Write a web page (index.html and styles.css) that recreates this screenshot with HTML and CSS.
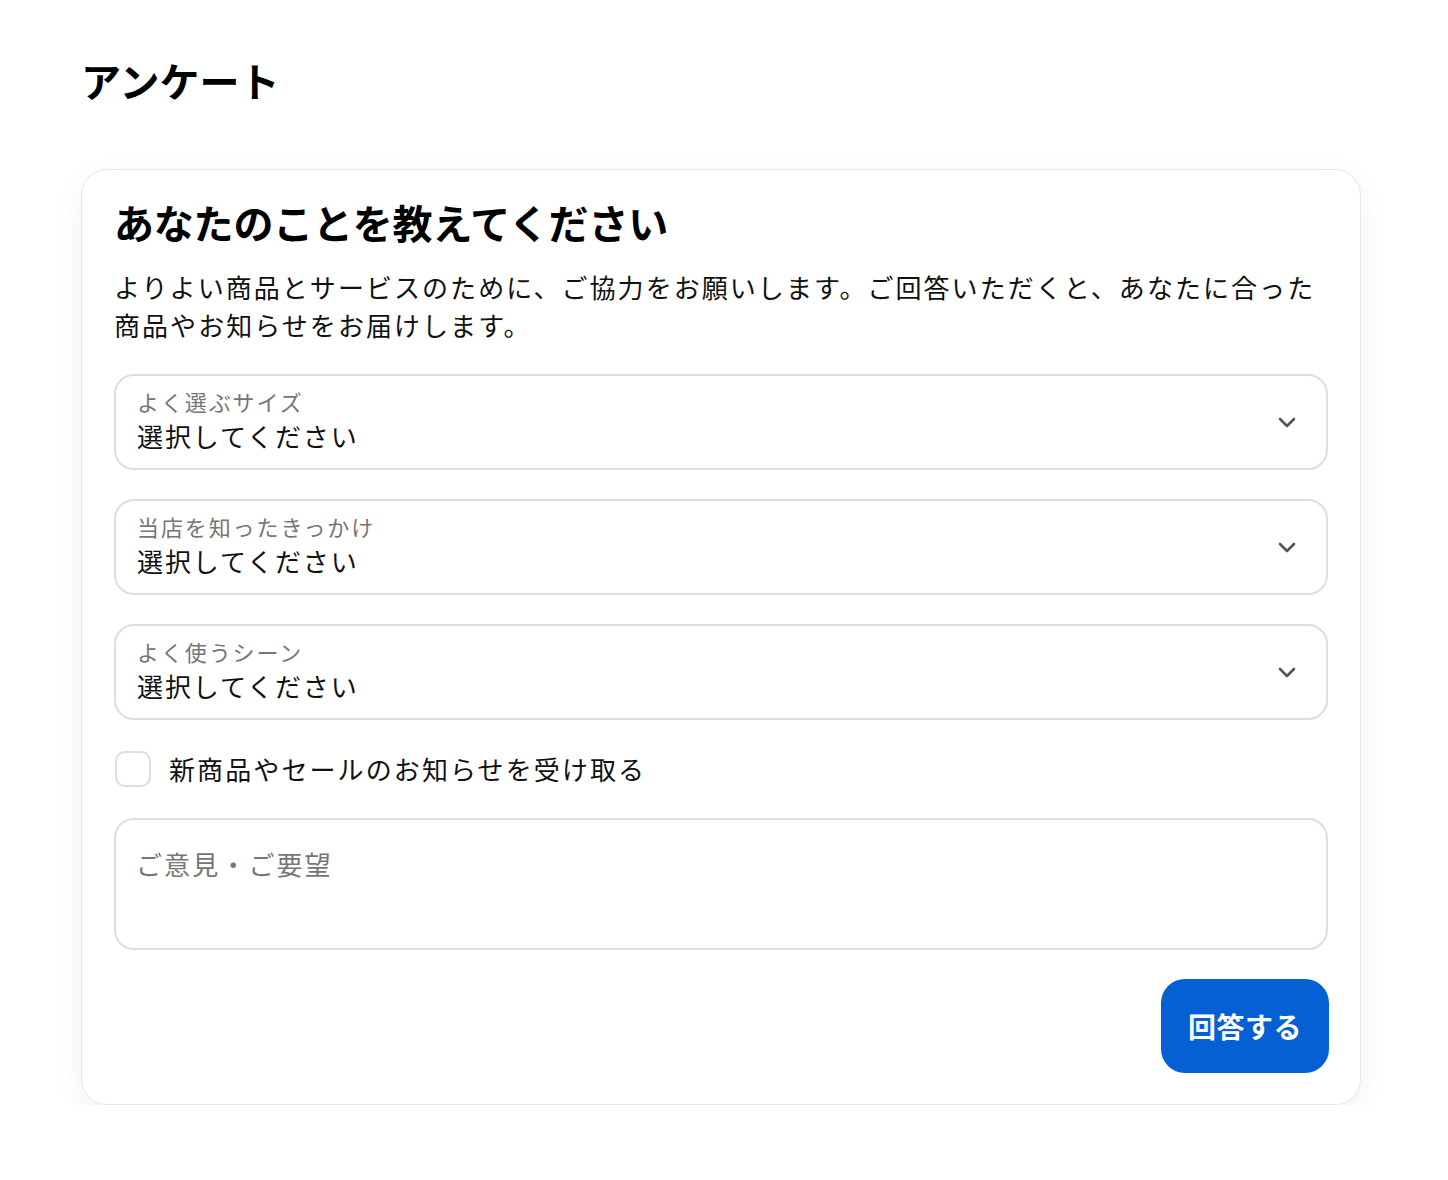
FILE: index.html
```html
<!DOCTYPE html>
<html lang="ja">
<head>
<meta charset="UTF-8">
<meta name="viewport" content="width=device-width, initial-scale=1.0">
<title>アンケート</title>
<link rel="stylesheet" href="styles.css">
</head>
<body>

<div class="page">
    <h1 class="page-title">アンケート</h1>

    <!-- アンケートカード -->
    <div class="card">
        <h2 class="card-title">あなたのことを教えてください</h2>
        <p class="lead">よりよい商品とサービスのために、ご協力をお願いします。ご回答いただくと、あなたに合った商品やお知らせをお届けします。</p>

        <div class="form">
            <div class="select">
                <div class="select-text">
                    <span class="select-label">よく選ぶサイズ</span>
                    <span class="select-value">選択してください</span>
                </div>
                <svg class="chevron" width="18" height="11" viewBox="0 0 18 11"><path d="M2 2l7 7 7-7" /></svg>
            </div>

            <div class="select">
                <div class="select-text">
                    <span class="select-label">当店を知ったきっかけ</span>
                    <span class="select-value">選択してください</span>
                </div>
                <svg class="chevron" width="18" height="11" viewBox="0 0 18 11"><path d="M2 2l7 7 7-7" /></svg>
            </div>

            <div class="select">
                <div class="select-text">
                    <span class="select-label">よく使うシーン</span>
                    <span class="select-value">選択してください</span>
                </div>
                <svg class="chevron" width="18" height="11" viewBox="0 0 18 11"><path d="M2 2l7 7 7-7" /></svg>
            </div>

            <label class="check">
                <span class="box"></span>
                <span class="check-text">新商品やセールのお知らせを受け取る</span>
            </label>

            <textarea class="comment" placeholder="ご意見・ご要望"></textarea>

            <div class="actions">
                <button class="submit">回答する</button>
            </div>
        </div>
    </div>
</div>

</body>
</html>
```

FILE: styles.css
```css
/* 全体 */
body {
    margin: 0;
    padding: 0;
    background: #fff;
    color: #111;
    font-family: "Noto Sans CJK JP", "Noto Sans", sans-serif;
}

.page {
    padding: 56px 0 0 81px;
}

.page-title {
    margin: 0 0 65px 0;
    font-size: 40px;
    line-height: 48px;
    font-weight: 700;
    color: #000;
}

/* カード */
.card {
    width: 1280px;
    box-sizing: border-box;
    border: 1px solid #e8e8e8;
    border-radius: 26px;
    background: #fff;
    box-shadow: 0 8px 28px rgba(0, 0, 0, 0.06);
    padding: 32px 32px 31px 32px;
}

.card-title {
    margin: -4px 0 22px 0;
    font-size: 40px;
    line-height: 48px;
    font-weight: 700;
    letter-spacing: -0.2px;
    color: #000;
}

.lead {
    margin: 0 0 30px 0;
    font-size: 26px;
    line-height: 38px;
    letter-spacing: 2.05px;
}

.form {
    display: flex;
    flex-direction: column;
    gap: 29px;
}

/* セレクト */
.select {
    height: 96px;
    box-sizing: border-box;
    border: 2px solid #dedede;
    border-radius: 20px;
    padding: 10px 30px 12px 21px;
    display: flex;
    align-items: center;
    justify-content: space-between;
}

.select-text {
    display: flex;
    flex-direction: column;
}

.select-label {
    font-size: 22px;
    line-height: 30px;
    color: #767676;
    letter-spacing: 1.9px;
}

.select-value {
    font-size: 26px;
    line-height: 40px;
    letter-spacing: 1.9px;
}

.chevron {
    fill: none;
    stroke: #555;
    stroke-width: 2.6;
    stroke-linecap: round;
    stroke-linejoin: round;
    margin-top: 2px;
}

/* チェックボックス */
.check {
    display: flex;
    align-items: center;
    gap: 18px;
    margin-left: 1px;
}

.box {
    width: 36px;
    height: 36px;
    box-sizing: border-box;
    border: 2px solid #dedede;
    border-radius: 10px;
}

.check-text {
    font-size: 26px;
    line-height: 40px;
    letter-spacing: 2.1px;
}

/* テキストエリア */
.comment {
    height: 132px;
    box-sizing: border-box;
    border: 2px solid #dedede;
    border-radius: 20px;
    padding: 24px 20px;
    font-family: inherit;
    font-size: 26px;
    line-height: 39px;
    letter-spacing: 2.1px;
    color: #111;
    resize: none;
    outline: none;
}

.comment::placeholder {
    color: #767676;
}

.actions {
    display: flex;
    justify-content: flex-end;
    margin-right: -1px;
}

.submit {
    width: 168px;
    height: 94px;
    border: none;
    border-radius: 24px;
    background: #0561d3;
    color: #fff;
    font-family: inherit;
    font-size: 28px;
    font-weight: 700;
    letter-spacing: 0.5px;
    cursor: pointer;
}
```
